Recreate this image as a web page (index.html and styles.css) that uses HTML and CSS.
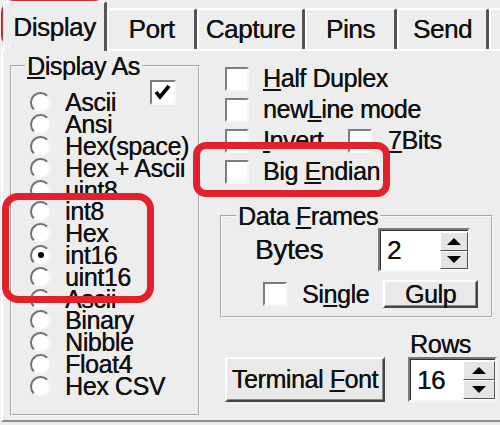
FILE: index.html
```html
<!DOCTYPE html>
<html lang="en">
	<head>
		<meta charset="UTF-8" />
		<title>Display options</title>
		<link rel="stylesheet" href="styles.css">
	</head>

	<body>
		<div class="tabs">
			<div class="tab tab-display tab-active">Display</div>
			<div class="tab tab-port">Port</div>
			<div class="tab tab-capture">Capture</div>
			<div class="tab tab-pins">Pins</div>
			<div class="tab tab-send">Send</div>
			<div class="tab tab-more"></div>
		</div>

		<div class="panel">
			<fieldset class="group group-display">
				<legend><u>D</u>isplay As</legend>
				<div class="display-body">
					<ul class="radios">
						<li class="radio-row"><span class="radio"></span>Ascii</li>
						<li class="radio-row"><span class="radio"></span>Ansi</li>
						<li class="radio-row"><span class="radio"></span>Hex(space)</li>
						<li class="radio-row"><span class="radio"></span>Hex + Ascii</li>
						<li class="radio-row"><span class="radio"></span>uint8</li>
						<li class="radio-row"><span class="radio"></span>int8</li>
						<li class="radio-row"><span class="radio"></span>Hex</li>
						<li class="radio-row"><span class="radio radio-on"></span>int16</li>
						<li class="radio-row"><span class="radio"></span>uint16</li>
						<li class="radio-row"><span class="radio"></span>Ascii</li>
						<li class="radio-row"><span class="radio"></span>Binary</li>
						<li class="radio-row"><span class="radio"></span>Nibble</li>
						<li class="radio-row"><span class="radio"></span>Float4</li>
						<li class="radio-row"><span class="radio"></span>Hex CSV</li>
					</ul>
					<span class="check check-as">
						<svg width="21" height="21" viewBox="0 0 21 21"><polyline points="4,10 8,15 17,4" fill="none" stroke="#000" stroke-width="3.6" /></svg>
					</span>
				</div>
			</fieldset>

			<div class="side">
				<div class="opt"><span class="check"></span><span><u>H</u>alf Duplex</span></div>
				<div class="opt"><span class="check"></span><span>new<u>L</u>ine mode</span></div>
				<div class="opt">
					<span class="check"></span><span class="opt-invert"><u>I</u>nvert</span>
					<span class="check check-7"></span><span><u>7</u>Bits</span>
				</div>
				<div class="opt"><span class="check"></span><span>Big <u>E</u>ndian</span></div>

				<fieldset class="group group-frames">
					<legend>Data <u>F</u>rames</legend>
					<div class="frame-row">
						<span class="bytes">Bytes</span>
						<div class="spin spin-bytes">
							<span class="spin-val">2</span>
							<span class="spin-btns"><span class="spin-up"></span><span class="spin-down"></span></span>
						</div>
					</div>
					<div class="frame-row frame-row-2">
						<span class="check check-single"></span>
						<span class="single">Si<u>n</u>gle</span>
						<span class="btn btn-gulp">Gulp</span>
					</div>
				</fieldset>

				<div class="bottom">
					<span class="btn btn-font"><span>Terminal <u>F</u>ont</span></span>
					<div class="rows">
						<div class="rows-label">Rows</div>
						<div class="spin spin-rows">
							<span class="spin-val">16</span>
							<span class="spin-btns"><span class="spin-up"></span><span class="spin-down"></span></span>
						</div>
					</div>
				</div>
			</div>
		</div>

		<!-- red highlight marks drawn over the dialog -->
		<div class="mark mark-tab"></div>
		<div class="mark mark-ints"></div>
		<div class="mark mark-endian"></div>
	</body>
</html>
```

FILE: styles.css
```css
body {
	margin: 0;
	width: 500px;
	height: 425px;
	overflow: hidden;
	position: relative;
	background: #ededed;
	color: #111;
	font-family: "Liberation Sans", Arial, sans-serif;
	font-size: 25px;
	letter-spacing: -0.4px;
	text-shadow: 0.3px 0 0 #111;
}

u {
	text-decoration-thickness: 2px;
	text-underline-offset: 2px;
}

/* tab strip */
.tabs {
	display: flex;
	align-items: flex-end;
	height: 49px;
	padding-left: 3px;
}

.tab {
	box-sizing: border-box;
	height: 41px;
	border-top: 2px solid #fff;
	border-left: 2px solid #fff;
	border-right: 3px solid #555;
	border-radius: 3px 3px 0 0;
	display: flex;
	align-items: center;
	justify-content: center;
	font-size: 26px;
}

.tab-active {
	height: 50px;
	margin-bottom: -2px;
	position: relative;
	z-index: 1;
	background: #ededed;
}

.tab-display { width: 104px; }
.tab-port { width: 90px; }
.tab-capture { width: 108px; }
.tab-pins { width: 92px; }
.tab-send { width: 92px; }
.tab-more { width: 11px; border-right: 0; }

/* panel */
.panel {
	box-sizing: border-box;
	height: 373px;
	margin-left: 1px;
	border-top: 2px solid #fff;
	border-left: 2px solid #fff;
	border-bottom: 2px solid #8a8a8a;
	padding: 3px 3px 0 7px;
	display: grid;
	grid-template-columns: 190px 1fr;
	column-gap: 20px;
	align-items: start;
}

.group {
	box-sizing: border-box;
	margin: 0;
	padding: 0;
	min-width: 0;
	border: 2px groove #fafafa;
}

.group legend {
	margin-left: 13px;
	padding: 0 2px;
	line-height: 24px;
}

.group-display {
	height: 362px;
}

/* radios and the checkbox share one cell, the box sits at its top right */
.display-body {
	display: grid;
}

.radios,
.check-as {
	grid-area: 1 / 1;
}

.radios {
	list-style: none;
	margin: 14px 0 0;
	padding: 0;
}

.radio-row {
	height: 21.8px;
	display: flex;
	align-items: center;
	white-space: nowrap;
}

.radio {
	box-sizing: border-box;
	flex: none;
	width: 21px;
	height: 21px;
	margin: 0 14px 0 18px;
	border-radius: 50%;
	border: 2px solid;
	border-color: #707070 #f2f2f2 #f2f2f2 #707070;
	background: #fff;
	display: flex;
	align-items: center;
	justify-content: center;
}

.radio-on::after {
	content: "";
	width: 6px;
	height: 6px;
	border-radius: 50%;
	background: #000;
}

.check {
	box-sizing: border-box;
	flex: none;
	width: 24px;
	height: 24px;
	border: 2px solid;
	border-color: #7d7d7d #f7f7f7 #f7f7f7 #7d7d7d;
	background: #fff;
}

.check-as {
	justify-self: end;
	align-self: start;
	width: 26px;
	height: 25px;
	margin: 2px 22px 0 0;
}

.check-as svg {
	display: block;
}

/* right side */
.opt {
	height: 31px;
	display: flex;
	align-items: center;
	white-space: nowrap;
}

.opt:first-child {
	margin-top: 9px;
}

.opt .check {
	margin: 0 14px 0 5px;
}

.opt-invert {
	width: 85px;
}

.opt .check-7 {
	margin: 0 16px 0 0;
}

.group-frames {
	height: 114px;
	margin-top: 17px;
	margin-right: 4px;
}

.group-frames legend {
	margin-left: 14px;
}

.frame-row {
	display: flex;
	align-items: center;
}

.bytes {
	width: 123px;
	margin-left: 33px;
	font-size: 28px;
}

.frame-row-2 {
	height: 30px;
	margin-top: 7px;
}

.check-single {
	margin-left: 41px;
}

.single {
	margin-left: 15px;
}

.btn {
	box-sizing: border-box;
	display: flex;
	align-items: center;
	justify-content: center;
	background: #e9e9e9;
	border: 2px solid;
	border-color: #fff #444 #444 #fff;
	box-shadow: inset -1px -1px 0 #8a8a8a;
	white-space: nowrap;
}

.btn-gulp {
	width: 95px;
	height: 28px;
	margin: 0 13px 0 auto;
}

.bottom {
	display: flex;
	align-items: flex-end;
	margin-top: 14px;
}

.btn-font {
	width: 160px;
	height: 45px;
	margin-left: 5px;
}

.rows {
	margin-left: 23px;
}

.rows-label {
	line-height: 24px;
	margin: 0 0 1px 2px;
}

/* spin boxes */
.spin {
	box-sizing: border-box;
	display: flex;
	background: #fff;
	border: 2px solid;
	border-color: #7a7a7a #f5f5f5 #f5f5f5 #7a7a7a;
	box-shadow: inset 1px 1px 0 #333;
	padding: 2px 0 1px 2px;
}

.spin-bytes {
	width: 92px;
	height: 44px;
}

.spin-rows {
	width: 89px;
	height: 45px;
}

.spin-val {
	flex: 1;
	display: flex;
	align-items: center;
	padding-left: 5px;
	font-size: 26px;
}

.spin-btns {
	width: 28px;
	display: flex;
	flex-direction: column;
}

.spin-rows .spin-btns {
	width: 32px;
}

.spin-btns span {
	flex: 1;
	display: flex;
	align-items: center;
	justify-content: center;
	background: #e4e4e4;
	border: 1px solid;
	border-color: #fff #555 #555 #fff;
}

.spin-up::after,
.spin-down::after {
	content: "";
	border-left: 7px solid transparent;
	border-right: 7px solid transparent;
}

.spin-up::after {
	border-bottom: 7px solid #000;
}

.spin-down::after {
	border-top: 7px solid #000;
}

/* red highlights */
.mark {
	position: absolute;
	box-sizing: border-box;
	border: 7px solid #e3212b;
	border-radius: 13px;
}

.mark-tab {
	left: 1px;
	top: 0;
	width: 106px;
	height: 48px;
}

.mark-ints {
	left: 2px;
	top: 193px;
	width: 152px;
	height: 110px;
	border-radius: 16px;
}

.mark-endian {
	left: 193px;
	top: 142px;
	width: 197px;
	height: 55px;
}
```
